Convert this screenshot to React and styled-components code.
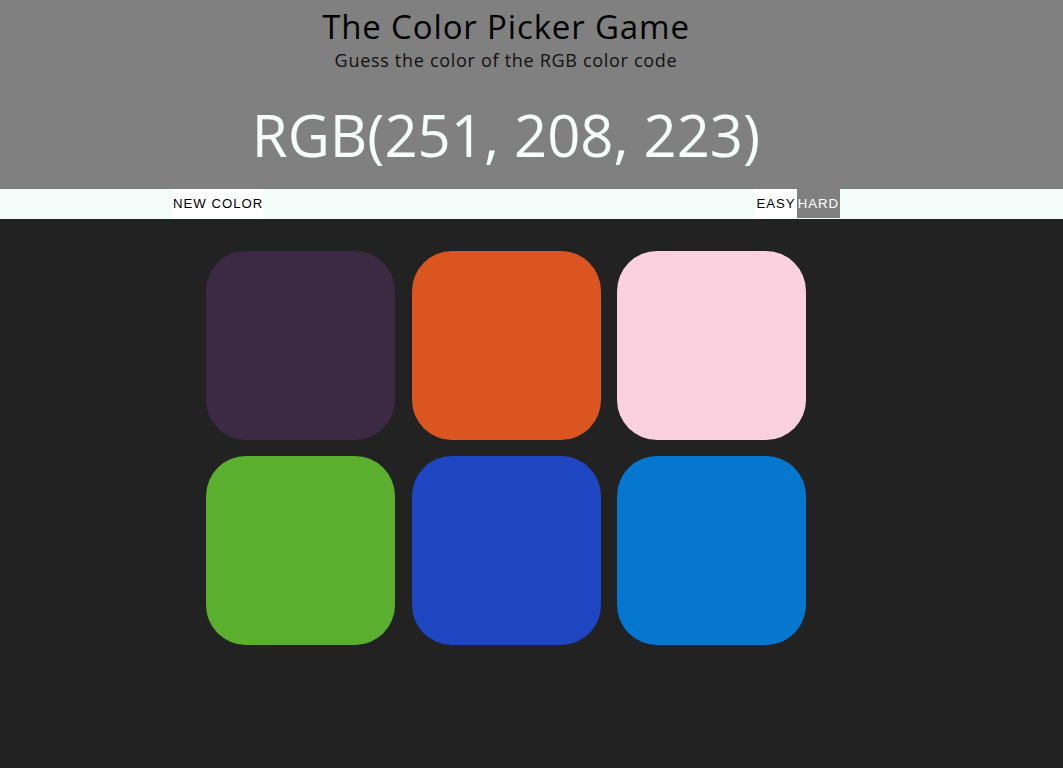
import React from "react";
import styled, { createGlobalStyle } from "styled-components";

const Global = createGlobalStyle`
  html, body { margin: 0; padding: 0; background: #222222; }
  body { font-family: "Open Sans", "Noto Sans", sans-serif; }
`;

const Header = styled.header`
  background: #808080;
  height: 189px;
  padding-right: 51px;
  display: flex;
  flex-direction: column;
  align-items: center;
  text-align: center;
  box-sizing: border-box;
`;

const Title = styled.h1`
  margin: 9px 0 0;
  font-weight: 400;
  font-size: 33px;
  line-height: 36px;
  color: #000;
  letter-spacing: 0.85px;
`;

const Subtitle = styled.p`
  margin: 5px 0 0;
  font-size: 18px;
  line-height: 20px;
  color: #111;
  letter-spacing: 0.7px;
`;

const Code = styled.h2`
  margin: 30px 0 0;
  font-weight: 400;
  font-size: 58px;
  line-height: 70px;
  color: #f4fdf9;
  letter-spacing: 0;
`;

const Stripe = styled.nav`
  background: #f3fcf8;
  height: 30px;
  padding-right: 51px;
  display: flex;
  justify-content: center;
`;

const StripeInner = styled.div`
  width: 668px;
  display: flex;
  justify-content: space-between;
  align-items: flex-start;
`;

const Modes = styled.div`
  display: flex;
`;

const Button = styled.button`
  font-family: "Liberation Sans", Arial, sans-serif;
  font-size: 13.2px;
  letter-spacing: 1px;
  text-transform: uppercase;
  height: 29px;
  border: none;
  padding: 0 ${(p) => p.$pad || 0}px;
  margin: 0;
  background: ${(p) => (p.$selected ? "#808080" : "#ffffff")};
  color: ${(p) => (p.$selected ? "#ffffff" : "#000000")};
  cursor: pointer;
`;

const Board = styled.main`
  padding: 32px 51px 0 0;
  display: flex;
  justify-content: center;
`;

const Grid = styled.div`
  display: grid;
  grid-template-columns: repeat(3, 189px);
  gap: 16px 16.5px;
`;

const Square = styled.div`
  width: 189px;
  height: 189px;
  border-radius: 40px;
  background: ${(p) => p.$color};
`;

const colors = [
  "rgb(60, 41, 68)",
  "rgb(219, 85, 32)",
  "rgb(251, 208, 223)",
  "rgb(91, 175, 46)",
  "rgb(30, 70, 194)",
  "rgb(6, 119, 207)",
];

export default function App() {
  return (
    <>
      <Global />
      <Header>
        <Title>The Color Picker Game</Title>
        <Subtitle>Guess the color of the RGB color code</Subtitle>
        <Code>RGB(251, 208, 223)</Code>
      </Header>
      <Stripe>
        <StripeInner>
          <Button $pad={1}>New Color</Button>
          <Modes>
            <Button $pad={1}>Easy</Button>
            <Button $pad={1} $selected>Hard</Button>
          </Modes>
        </StripeInner>
      </Stripe>
      <Board>
        <Grid>
          {colors.map((c) => (
            <Square key={c} $color={c} />
          ))}
        </Grid>
      </Board>
    </>
  );
}
